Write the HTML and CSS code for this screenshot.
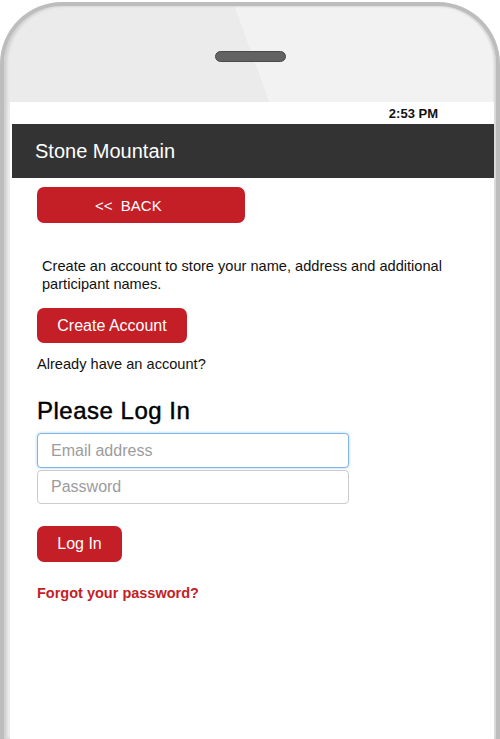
FILE: index.html
```html
<!DOCTYPE html>
<html lang="en">
<head>
<meta charset="utf-8">
<title>Stone Mountain - Log In</title>
<link rel="stylesheet" href="styles.css">
</head>
<body>
<div class="phone">
  <div class="bezel"><div class="speaker"></div></div>
  <div class="screen">
    <div class="status">2:53 PM</div>
    <div class="header">Stone Mountain</div>
    <div class="content">
      <button class="btn btn-back" type="button">&lt;&lt;&nbsp; BACK</button>
      <p class="intro">Create an account to store your name, address and additional participant names.</p>
      <button class="btn btn-create" type="button">Create Account</button>
      <p class="already">Already have an account?</p>
      <h1 class="title">Please Log In</h1>
      <input class="field field-focus" type="email" placeholder="Email address">
      <input class="field field-pass" type="password" placeholder="Password">
      <button class="btn btn-login" type="button">Log In</button>
      <a class="forgot" href="#">Forgot your password?</a>
    </div>
  </div>
</div>
</body>
</html>
```
FILE: styles.css
```css
html, body {
  margin: 0;
  padding: 0;
  background: #ffffff;
  overflow: hidden;
}
body {
  width: 500px;
  height: 739px;
  font-family: "Liberation Sans", Arial, Helvetica, sans-serif;
}
.phone {
  margin-top: 2px;
  width: 500px;
  box-sizing: border-box;
  border: 4px solid #bdbdbd;
  border-bottom: none;
  border-radius: 62px 62px 0 0;
  padding: 0 2px 0 6px;
  background: #eeeeee linear-gradient(70deg, #ebebeb 50.5%, #f2f2f2 50.5%) top left / 100% 100px no-repeat;
  box-shadow: inset 3px 0 3px #d0d0d0, inset -2px 0 2px #d6d6d6;
}
.bezel {
  height: 96px;
  display: flex;
  justify-content: center;
  padding-top: 45px;
  box-sizing: border-box;
}
.speaker {
  width: 71px;
  height: 11px;
  box-sizing: border-box;
  border: 1px solid #4a4a4a;
  border-radius: 6px;
  background: #626262;
  margin-left: -4px;
}
.screen {
  background: #ffffff;
  height: 637px;
  overflow: hidden;
}
.status {
  height: 22px;
  box-sizing: border-box;
  padding: 2px 56px 0 0;
  line-height: 20px;
  text-align: right;
  font-size: 13px;
  font-weight: bold;
  color: #111;
}
.header {
  height: 54px;
  margin-left: 2px;
  background: #333333;
  color: #ffffff;
  display: flex;
  align-items: center;
  padding-left: 23px;
  font-size: 20px;
}
.content {
  padding: 9px 0 0 27px;
  color: #111;
}
.btn {
  display: block;
  border: none;
  margin: 0;
  background: #c41e26;
  color: #ffffff;
  font-family: inherit;
  font-size: 15.5px;
  border-radius: 7px;
  padding: 0;
  cursor: pointer;
}
.btn-back {
  width: 208px;
  height: 36px;
  text-align: left;
  padding-left: 58px;
  font-size: 15px;
}
.intro {
  margin: 34px 0 0 5px;
  width: 420px;
  font-size: 14.6px;
  line-height: 18px;
}
.btn-create {
  margin-top: 15px;
  width: 150px;
  height: 35px;
  font-size: 16px;
}
.already {
  margin: 12px 0 0 0;
  font-size: 14.6px;
  line-height: 18px;
}
.title {
  margin: 24px 0 0 0;
  font-size: 24px;
  line-height: 28px;
  font-weight: normal;
  letter-spacing: 0.5px;
  -webkit-text-stroke: 0.45px #000;
  color: #000;
}
.field {
  display: block;
  width: 312px;
  box-sizing: border-box;
  border: 1px solid #cccccc;
  border-radius: 4px;
  padding: 0 0 0 13px;
  font-family: inherit;
  font-size: 16px;
  color: #333;
  background: #fff;
  outline: none;
}
.field::placeholder {
  color: #9c9c9c;
}
.field-focus {
  margin-top: 8px;
  height: 35px;
  border-color: #80b3e6;
  box-shadow: 0 0 3px rgba(102, 175, 233, 0.6);
}
.field-pass {
  margin-top: 2px;
  height: 34px;
}
.btn-login {
  margin-top: 22px;
  width: 85px;
  height: 36px;
  font-size: 16px;
}
.forgot {
  display: block;
  margin-top: 22px;
  font-size: 14.5px;
  line-height: 18px;
  font-weight: bold;
  color: #c41e26;
  text-decoration: none;
}
```
